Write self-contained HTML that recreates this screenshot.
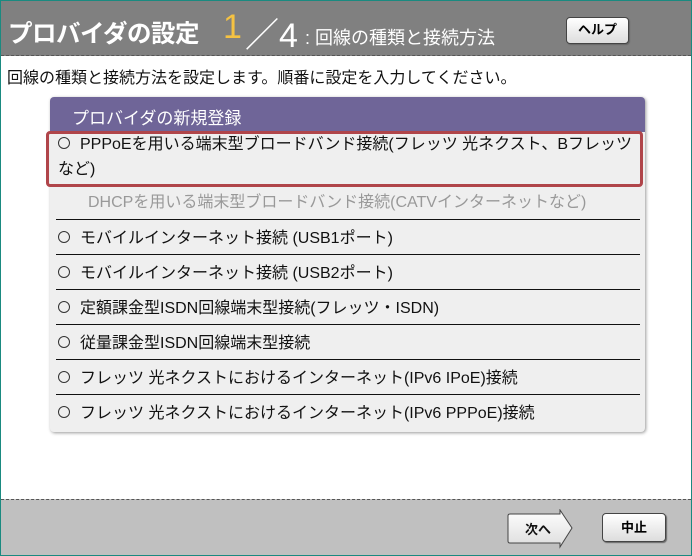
<!DOCTYPE html><html><head><meta charset="utf-8"><style>
*{margin:0;padding:0;box-sizing:border-box}
body{width:692px;height:556px;overflow:hidden;background:#fff;font-family:"Liberation Sans","Noto Sans CJK JP",sans-serif;position:relative}
.frame{position:absolute;inset:0;border:1px solid #1a8a80}
.hdr{position:absolute;left:1px;top:1px;width:690px;height:55px;background:#808080;border-bottom:1px dashed #555}
.t{position:absolute;left:7px;top:14px;color:#fff;font-size:24.5px;font-weight:bold;letter-spacing:-0.5px}
.n1{position:absolute;left:222px;top:7px;color:#f5c242;font-size:34px}
.n2{position:absolute;left:244px;top:7px;color:#fff;font-size:34px}
.sub{position:absolute;left:304px;top:23px;color:#fff;font-size:18px}
.btn{position:absolute;background:linear-gradient(#fff,#ddd);border:1px solid #444;border-radius:4px;box-shadow:1px 1px 1px #666;font-size:13px;text-align:center}
.desc{position:absolute;left:7px;top:64px;font-size:16px;color:#111}
.panel{position:absolute;left:50px;top:97px;width:595px;height:335px;background:#efefef;border-radius:4px;box-shadow:1px 1px 3px #999}
.ph{height:35px;background:#6f6598;border-radius:4px 4px 0 0;color:#fff;font-size:17px;padding:7px 0 0 22px}
.sel{position:absolute;left:46px;top:131px;width:597px;height:56px;border:3px solid #b0454a;border-radius:4px}
.row{position:absolute;left:58px;font-size:16px;color:#111}
.line{position:absolute;left:56px;width:584px;height:1px;background:#111}
.o{display:inline-block;width:12px;height:12px;border:1.5px solid #333;border-radius:50%;margin-right:10px;vertical-align:0px}
.ftr{position:absolute;left:1px;top:499px;width:690px;height:56px;background:#c0c0c0;border-top:1px dashed #555}
</style></head><body>
<div class="hdr">
<div class="t">プロバイダの設定</div>
<div class="n1">1</div><div class="n2">／4</div>
<div class="sub">: 回線の種類と接続方法</div>
<div class="btn" style="left:565px;top:16px;width:63px;height:27px;line-height:24px;font-weight:bold">ヘルプ</div>
</div>
<div class="desc">回線の種類と接続方法を設定します。順番に設定を入力してください。</div>
<div class="panel"><div class="ph">プロバイダの新規登録</div></div>
<div class="sel"></div>
<div class="row" style="top:132px;width:585px;line-height:25px"><span class="o"></span>PPPoEを用いる端末型ブロードバンド接続(フレッツ 光ネクスト、Bフレッツ<br>など)</div>
<div class="row" style="top:188px;left:88px;color:#999">DHCPを用いる端末型ブロードバンド接続(CATVインターネットなど)</div>
<div class="line" style="top:219px"></div>
<div class="row" style="top:224px"><span class="o"></span>モバイルインターネット接続 (USB1ポート)</div>
<div class="line" style="top:254px"></div>
<div class="row" style="top:259px"><span class="o"></span>モバイルインターネット接続 (USB2ポート)</div>
<div class="line" style="top:289px"></div>
<div class="row" style="top:294px"><span class="o"></span>定額課金型ISDN回線端末型接続(フレッツ・ISDN)</div>
<div class="line" style="top:324px"></div>
<div class="row" style="top:329px"><span class="o"></span>従量課金型ISDN回線端末型接続</div>
<div class="line" style="top:359px"></div>
<div class="row" style="top:364px"><span class="o"></span>フレッツ 光ネクストにおけるインターネット(IPv6 IPoE)接続</div>
<div class="line" style="top:394px"></div>
<div class="row" style="top:399px"><span class="o"></span>フレッツ 光ネクストにおけるインターネット(IPv6 PPPoE)接続</div>
<div class="ftr"></div>
<svg style="position:absolute;left:507px;top:509px" width="68" height="40"><defs><linearGradient id="g" x1="0" y1="0" x2="0" y2="1"><stop offset="0" stop-color="#fff"/><stop offset="1" stop-color="#ddd"/></linearGradient></defs><path d="M3 5 H53 L53 1 L65 19 L53 38 L53 34 H3 Q1 34 1 32 V7 Q1 5 3 5Z" fill="url(#g)" stroke="#444"/><text x="31" y="25" font-size="13" text-anchor="middle" font-family="Noto Sans CJK JP,sans-serif" font-weight="bold" fill="#111">次へ</text></svg>
<div class="btn" style="left:602px;top:513px;width:64px;height:29px;line-height:27px;font-weight:bold">中止</div>
<div class="frame"></div>
</body></html>
